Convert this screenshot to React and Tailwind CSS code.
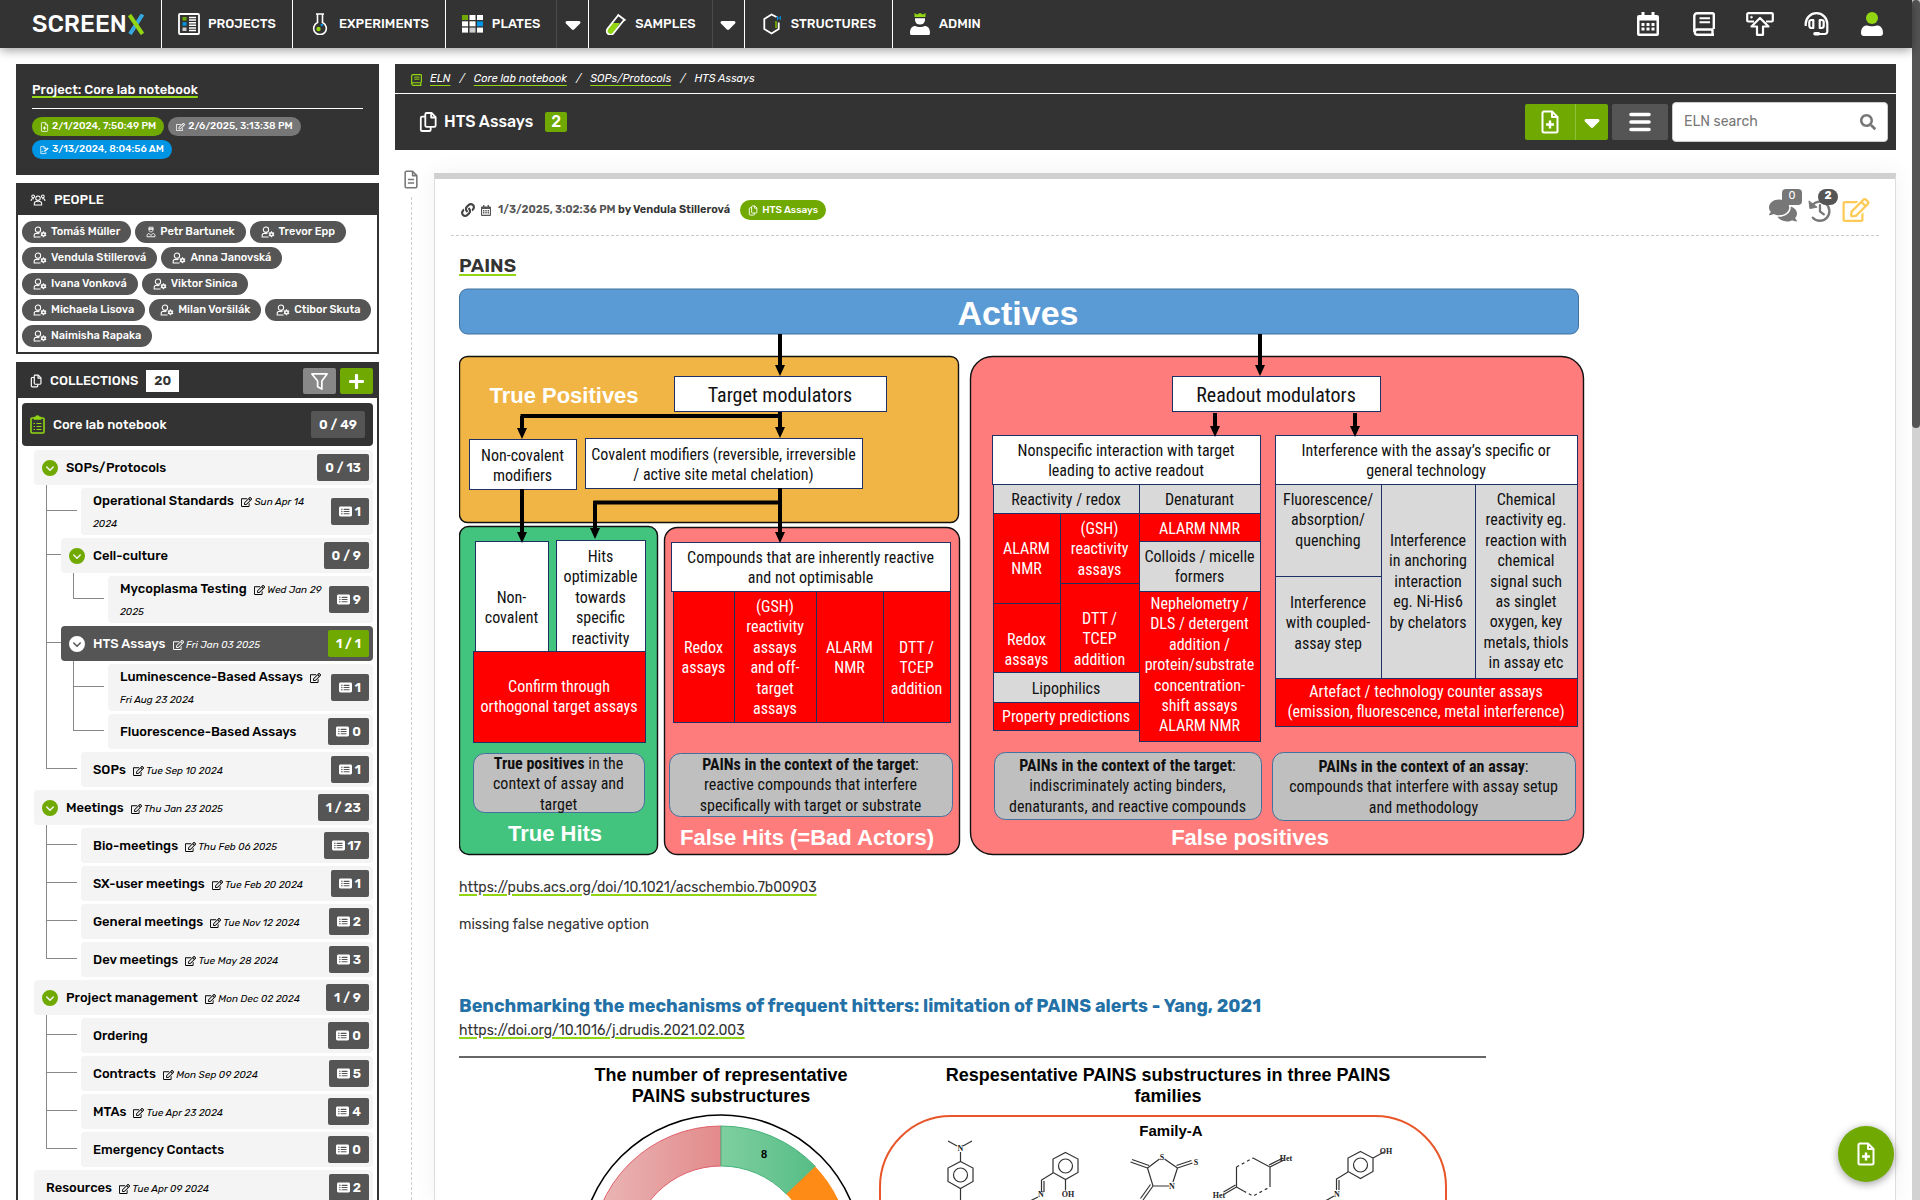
import { FaCaretDown, FaCircleChevronDown, FaRectangleList } from 'react-icons/fa6'
import { FaComments, FaLink, FaPlus, FaRegEdit, FaSearch } from 'react-icons/fa'

/* ---------- Icons ---------- */

function CopyIcon({ className }) {
  return (
    <svg viewBox="0 0 20 24" className={className} fill="none" stroke="currentColor" strokeWidth="2" strokeLinejoin="round" aria-hidden="true">
      <path d="M7 3.5A1.5 1.5 0 0 1 8.5 2H14l4.500 4.500V16a1.500 1.500 0 0 1-1.500 1.500H8.500A1.500 1.500 0 0 1 7 16z" />
      <path d="M13.500 2v5h5" />
      <path d="M7 6H3.500A1.500 1.500 0 0 0 2 7.500V20.500A1.500 1.500 0 0 0 3.500 22h8a1.500 1.500 0 0 0 1.500-1.500v-3" />
    </svg>
  )
}

function FileIcon({ className, children }) {
  return (
    <svg viewBox="0 0 18 24" className={className} fill="none" stroke="currentColor" strokeWidth="2" strokeLinejoin="round" aria-hidden="true">
      <path d="M1.500 3A1.500 1.500 0 0 1 3 1.500h8L16.500 7v14a1.500 1.500 0 0 1-1.500 1.500H3A1.500 1.500 0 0 1 1.500 21z" />
      <path d="M11 1.500V7h5.500" />
      {children}
    </svg>
  )
}

function FilePlusIcon({ className }) {
  return (
    <FileIcon className={className}>
      <path d="M9 10.500v8M5 14.500h8" strokeWidth="2.400" />
    </FileIcon>
  )
}

function FileLinesIcon({ className }) {
  return (
    <FileIcon className={className}>
      <path d="M5 12h8M5 16.500h8" />
    </FileIcon>
  )
}

function FileSignIcon({ className }) {
  return (
    <svg viewBox="0 0 24 22" className={className} fill="none" stroke="currentColor" strokeWidth="2" strokeLinejoin="round" aria-hidden="true">
      <path d="M16 16v4.500H2V1.500h9l5 5" />
      <path d="M10.500 1.500V7H16" />
      <path d="M11 15l1-3 8-7 2.500 2.500-8.500 7z" fill="currentColor" strokeWidth="1" />
      <path d="M5 17l2-4 1.500 3.500" strokeWidth="1.500" />
    </svg>
  )
}

function CalendarIcon({ className }) {
  return (
    <svg viewBox="0 0 22 24" className={className} aria-hidden="true">
      <path fill="currentColor" d="M4.500 0h3v3h7V0h3v3H20a2 2 0 0 1 2 2v17a2 2 0 0 1-2 2H2a2 2 0 0 1-2-2V5a2 2 0 0 1 2-2h2.500zM2.500 8.500V21.500h17V8.500z" fillRule="evenodd" />
      <path fill="currentColor" d="M4.500 11h3v3h-3zM9.500 11h3v3h-3zM14.500 11h3v3h-3zM4.500 15.500h3v3h-3zM9.500 15.500h3v3h-3zM14.500 15.500h3v3h-3z" />
    </svg>
  )
}

function BookIcon({ className }) {
  return (
    <svg viewBox="0 0 22 24" className={className} fill="none" stroke="currentColor" strokeWidth="2.400" aria-hidden="true">
      <path d="M20.500 17.500H4A2.700 2.700 0 0 0 4 22.800h17M20.800 17V2.500a1.200 1.200 0 0 0-1.200-1.200H4A2.700 2.700 0 0 0 1.300 4v16M19.500 17.500v5" />
      <path d="M6.500 6.300H17M6.500 10.300H17" strokeWidth="2" />
    </svg>
  )
}

function UploadIcon({ className }) {
  return (
    <svg viewBox="0 0 28 24" className={className} fill="none" stroke="currentColor" strokeWidth="2.200" strokeLinejoin="round" aria-hidden="true">
      <path d="M8 9.500H2.200a1 1 0 0 1-1-1V2.200a1 1 0 0 1 1-1H25.800a1 1 0 0 1 1 1v6.300a1 1 0 0 1-1 1H20" />
      <path d="M14 6l8.500 8.500H17V22.800h-6V14.500H5.500z" />
      <circle cx="5.500" cy="5.200" r="1" fill="currentColor" strokeWidth="0.500" />
    </svg>
  )
}

function HeadsetIcon({ className }) {
  return (
    <svg viewBox="0 0 24 24" className={className} fill="none" stroke="currentColor" strokeWidth="2.200" strokeLinejoin="round" aria-hidden="true">
      <path d="M1.200 14v-2a10.800 10.800 0 0 1 21.600 0v7.500a2.500 2.500 0 0 1-2.500 2.500H13" />
      <path d="M8.800 8v8H7a2.200 2.200 0 0 1-2.200-2.200V10.200A2.200 2.200 0 0 1 7 8zM15.200 8v8H17a2.200 2.200 0 0 0 2.200-2.200V10.200A2.200 2.200 0 0 0 17 8z" />
      <path d="M10.500 21.700h3.500" strokeWidth="3.600" strokeLinecap="round" />
    </svg>
  )
}

function AccountIcon({ className }) {
  return (
    <svg viewBox="0 0 22 24" className={className} aria-hidden="true">
      <circle cx="11" cy="6" r="6" fill="#92d613" />
      <path d="M0 21c0-5 2.500-7.500 6-7.500 2 1 8 1 10 0 3.500 0 6 2.500 6 7.500a3 3 0 0 1-3 3H3a3 3 0 0 1-3-3z" fill="#fff" />
    </svg>
  )
}

function HistoryIcon({ className }) {
  return (
    <svg viewBox="0 0 24 24" className={className} fill="none" stroke="currentColor" strokeWidth="2.400" aria-hidden="true">
      <path d="M4.500 6.500A10 10 0 1 1 5 19.500" strokeLinecap="round" />
      <path d="M12.500 6.500V13l4 3" strokeLinecap="round" />
      <path d="M1 2l1 8 7.500-1.500z" fill="currentColor" strokeWidth="1" strokeLinejoin="round" />
    </svg>
  )
}

function MenuIcon({ className }) {
  return (
    <svg viewBox="0 0 22 20" className={className} stroke="currentColor" strokeWidth="3.600" strokeLinecap="round" aria-hidden="true">
      <path d="M2 2.500h18M2 10h18M2 17.500h18" />
    </svg>
  )
}

function UserCogIcon({ className }) {
  return (
    <svg viewBox="0 0 24 20" className={className} fill="none" stroke="currentColor" strokeWidth="1.800" aria-hidden="true">
      <circle cx="8.500" cy="6" r="4.600" />
      <path d="M13 18.500H2v-2.500c0-2.500 2-3.800 4-3.800 1.500.8 3.500.8 5 0" />
      <circle cx="18" cy="14" r="2.900" strokeWidth="2.600" />
      <path d="M18 8.800v2M18 17.200v2M13.500 11.400l1.700 1M20.800 15.600l1.700 1M13.500 16.600l1.700-1M20.800 12.400l1.700-1" strokeWidth="2" />
    </svg>
  )
}

function UserTieIcon({ className }) {
  return (
    <svg viewBox="0 0 20 22" className={className} fill="none" stroke="currentColor" strokeWidth="1.800" aria-hidden="true">
      <path d="M5.500 1.500h9M6 2v5c0 2 1.800 3.800 4 3.800S14 9 14 7V2" />
      <path d="M5.500 5h9" strokeWidth="3" />
      <path d="M2 20.500v-2c0-3 2-4.500 4.500-4.500l3.500 4 3.500-4c2.500 0 4.500 1.500 4.500 4.500v2z" />
    </svg>
  )
}

function UsersIcon({ className }) {
  return (
    <svg viewBox="0 0 32 26" className={className} fill="none" stroke="currentColor" strokeWidth="2.200" aria-hidden="true">
      <circle cx="16" cy="9" r="4.800" />
      <circle cx="5.500" cy="5" r="3" />
      <circle cx="26.500" cy="5" r="3" />
      <path d="M8 24v-3c0-3 2-5 4.500-5 2 1 5 1 7 0 2.500 0 4.500 2 4.500 5v3z" />
      <path d="M1.200 15v-1.500a3 3 0 0 1 3-3h3M30.800 15v-1.500a3 3 0 0 0-3-3h-3" />
    </svg>
  )
}

function FilterIcon({ className }) {
  return (
    <svg viewBox="0 0 18 18" className={className} fill="none" stroke="currentColor" strokeWidth="1.800" strokeLinejoin="round" aria-hidden="true">
      <path d="M1 1h16l-5.500 7.500v8.500L7 14.500v-6z" />
    </svg>
  )
}

function ClipboardIcon({ className }) {
  return (
    <svg viewBox="0 0 15 19" className={className} fill="none" stroke="currentColor" strokeWidth="1.600" aria-hidden="true">
      <rect x="1" y="3" width="13" height="15" rx="1" />
      <path d="M4.500 4V2.500h1.500a1.500 1.500 0 0 1 3 0h1.500V4z" fill="currentColor" />
      <path d="M3.500 8.500H5M6.500 8.500H11.500M3.500 11.500H5M6.500 11.500H11.500M3.500 14.500H5M6.500 14.500H11.500" strokeWidth="1.200" />
    </svg>
  )
}

function ProjectsIcon() {
  return (
    <svg viewBox="0 0 22 22" className="h-[22px] w-[22px]" aria-hidden="true">
      <rect x="1" y="1" width="20" height="20" rx="1" fill="none" stroke="#fff" strokeWidth="1.800" />
      <rect x="4.500" y="4" width="4" height="3.500" fill="#6fa901" />
      <rect x="4.500" y="9.200" width="4" height="3.500" fill="#0094e4" />
      <rect x="4.500" y="14.500" width="4" height="3.500" fill="#ccc" />
      <path d="M11 4.500h7M11 7h7M11 9.700h7M11 12.200h7M11 15h7M11 17.500h7" stroke="#fff" strokeWidth="1.500" />
    </svg>
  )
}

function FlaskIcon() {
  return (
    <svg viewBox="0 0 16 22" className="h-[22px] w-4" aria-hidden="true">
      <path d="M4 1h8M5.500 1v8.500a6.300 6.300 0 1 0 5 0V1" fill="none" stroke="#fff" strokeWidth="1.600" />
      <circle cx="6.500" cy="16" r="2.200" fill="#92d613" />
      <circle cx="9.800" cy="12" r="1.300" fill="#0094e4" />
    </svg>
  )
}

function PlatesIcon() {
  const colors = ['#6fa901', '#fff', '#fff', '#fff', '#fff', '#0094e4', '#fff', '#ccc', '#fff']
  return (
    <svg viewBox="0 0 21 18" className="h-[18px] w-[21px]" aria-hidden="true">
      {colors.map((c, i) => (
        <rect key={i} x={(i % 3) * 7.5} y={Math.floor(i / 3) * 6.3} width="6" height="5" fill={c} />
      ))}
    </svg>
  )
}

function TubeIcon() {
  return (
    <svg viewBox="0 0 22 22" className="h-[22px] w-[22px]" aria-hidden="true">
      <path d="M6.500 10h8.500l-6.500 9.500a3.500 3.500 0 0 1-6-4z" fill="#92d613" />
      <path d="M12.500 1.500l8 6M13 2.500L2.500 15.800a3.700 3.700 0 0 0 6 4.400L19 7" fill="none" stroke="#fff" strokeWidth="1.800" />
    </svg>
  )
}

function HexagonIcon() {
  return (
    <svg viewBox="0 0 18 22" className="h-[22px] w-[18px]" aria-hidden="true">
      <path d="M13.500 4L8.500 1.500 1.300 6v10l7.200 4.500 7.200-4.500V9.500" fill="none" stroke="#fff" strokeWidth="1.800" />
      <path d="M13 8v7" stroke="#6fa901" strokeWidth="1.800" />
      <path d="M14.500 3v4M17.300 3v4M14.500 5h3" stroke="#0094e4" strokeWidth="1" />
    </svg>
  )
}

function AdminIcon() {
  return (
    <svg viewBox="0 0 20 22" className="h-[22px] w-5" aria-hidden="true">
      <path d="M4.500 4V0L7 1.500 10 0l3 1.500L15.500 0v4z" fill="#92d613" />
      <path d="M5 5.300h10V7a5 4.500 0 0 1-10 0z" fill="#fff" />
      <path d="M0 20c0-4.500 2-7 5.500-7 2 1.300 7 1.300 9 0 3.500 0 5.500 2.500 5.500 7 0 1.500-.5 2-2 2H2c-1.500 0-2-.5-2-2z" fill="#fff" />
    </svg>
  )
}

function Logo() {
  return (
    <a href="#home" aria-label="ScreenX" className="flex w-[161px] items-center pl-8">
      <span className="text-2xl leading-none font-medium">SCREEN</span>
      <svg viewBox="0 0 18 21" className="h-[21px] w-[18px]" aria-hidden="true">
        <path d="M15.500 0.500L3 20" stroke="#36a9e1" strokeWidth="4" />
        <path d="M2.500 1l13 19" stroke="#92d613" strokeWidth="4" />
      </svg>
    </a>
  )
}

/* ---------- Top navigation ---------- */

const navItems = [
  { label: 'PROJECTS', icon: ProjectsIcon },
  { label: 'EXPERIMENTS', icon: FlaskIcon },
  { label: 'PLATES', icon: PlatesIcon, menu: true },
  { label: 'SAMPLES', icon: TubeIcon, menu: true },
  { label: 'STRUCTURES', icon: HexagonIcon },
  { label: 'ADMIN', icon: AdminIcon },
]

const navActions = [
  { label: 'Calendar', icon: CalendarIcon, size: 'h-6 w-[22px]' },
  { label: 'Notebook', icon: BookIcon, size: 'h-6 w-[22px]' },
  { label: 'Upload', icon: UploadIcon, size: 'h-6 w-7' },
  { label: 'Support', icon: HeadsetIcon, size: 'h-6 w-[25px]' },
  { label: 'Account', icon: AccountIcon, size: 'h-6 w-[22px]' },
]

function Navbar() {
  return (
    <nav className="relative z-10 flex h-12 shrink-0 bg-[#333] text-white shadow-[0_2px_10px_rgba(0,0,0,0.4)]">
      <Logo />
      {navItems.map(({ label, icon: Icon, menu }) => (
        <div key={label} className="flex border-l border-white">
          <a href={`#${label.toLowerCase()}`} className="flex items-center gap-2 px-4 text-[13px] font-medium">
            <span className="flex w-[22px] justify-center">
              <Icon />
            </span>
            {label}
          </a>
          {menu && (
            <button aria-label={`${label} menu`} className="flex w-8 items-center justify-center border-l border-[#4a4a4a]">
              <FaCaretDown className="h-6 w-6" />
            </button>
          )}
        </div>
      ))}
      <div className="ml-auto flex items-center pr-3">
        {navActions.map(({ label, icon: Icon, size }) => (
          <button key={label} aria-label={label} className="flex w-14 justify-center">
            <Icon className={size} />
          </button>
        ))}
      </div>
    </nav>
  )
}

/* ---------- Sidebar ---------- */

const people = [
  'Tomáš Müller',
  'Petr Bartunek',
  'Trevor Epp',
  'Vendula Stillerová',
  'Anna Janovská',
  'Ivana Vonková',
  'Viktor Sinica',
  'Michaela Lisova',
  'Milan Voršilák',
  'Ctibor Skuta',
  'Naimisha Rapaka',
]

const tree = [
  {
    name: 'SOPs/Protocols',
    count: '0 / 13',
    children: [
      { name: 'Operational Standards', date: 'Sun Apr 14 2024', count: '1', tall: true },
      {
        name: 'Cell-culture',
        count: '0 / 9',
        children: [{ name: 'Mycoplasma Testing', date: 'Wed Jan 29 2025', count: '9', tall: true }],
      },
      {
        name: 'HTS Assays',
        date: 'Fri Jan 03 2025',
        count: '1 / 1',
        active: true,
        children: [
          { name: 'Luminescence-Based Assays', date: 'Fri Aug 23 2024', count: '1', tall: true },
          { name: 'Fluorescence-Based Assays', count: '0' },
        ],
      },
      { name: 'SOPs', date: 'Tue Sep 10 2024', count: '1' },
    ],
  },
  {
    name: 'Meetings',
    date: 'Thu Jan 23 2025',
    count: '1 / 23',
    children: [
      { name: 'Bio-meetings', date: 'Thu Feb 06 2025', count: '17' },
      { name: 'SX-user meetings', date: 'Tue Feb 20 2024', count: '1' },
      { name: 'General meetings', date: 'Tue Nov 12 2024', count: '2' },
      { name: 'Dev meetings', date: 'Tue May 28 2024', count: '3' },
    ],
  },
  {
    name: 'Project management',
    date: 'Mon Dec 02 2024',
    count: '1 / 9',
    children: [
      { name: 'Ordering', count: '0' },
      { name: 'Contracts', date: 'Mon Sep 09 2024', count: '5' },
      { name: 'MTAs', date: 'Tue Apr 23 2024', count: '4' },
      { name: 'Emergency Contacts', count: '0' },
    ],
  },
  { name: 'Resources', date: 'Tue Apr 09 2024', count: '2' },
]

function TreeRow({ item }) {
  const { name, date, count, children, active, tall } = item
  return (
    <div
      className={`flex items-center rounded-sm pr-1 ${tall ? 'h-[47px]' : 'h-[35px]'} ${
        active ? 'bg-[#555] text-white' : 'bg-[#f4f4f4] text-black'
      } ${children ? 'pl-2' : 'pl-3'}`}
    >
      {children && (
        <button aria-label={`Toggle ${name}`} className="mr-2 shrink-0">
          <FaCircleChevronDown className={`h-4 w-4 ${active ? 'text-white' : 'text-[#6fa901]'}`} />
        </button>
      )}
      <a href="#collection" className="min-w-0 flex-1 leading-5">
        <span className="text-[13px] font-medium">{name}</span>
        {date && (
          <span className="text-[10px] italic">
            <FaRegEdit className="ml-[7px] inline h-[10px] w-[11px]" /> {date}
          </span>
        )}
      </a>
      <span
        className={`flex h-[27px] shrink-0 items-center gap-[3px] rounded-xs px-2 text-[13px] font-semibold text-white ${
          active ? 'bg-[#6fa901]' : 'bg-[#555]'
        }`}
      >
        {!count.includes('/') && <FaRectangleList className="h-[13px] w-[13px]" />}
        {count}
      </span>
    </div>
  )
}

function TreeBranch({ items }) {
  return (
    <ul className="ml-3">
      {items.map((item, i) => {
        const last = i === items.length - 1
        return (
          <li key={item.name} className="flex">
            <div className={`flex shrink-0 flex-col ${item.children ? 'w-[15px]' : 'w-[35px]'}`}>
              <div
                className={`border-b border-l border-[#888] ${item.tall ? 'h-[26px]' : 'h-5'} ${
                  item.children ? 'w-[15px]' : 'w-[31px]'
                }`}
              />
              {!last && <div className="flex-1 border-l border-[#888]" />}
            </div>
            <div className="min-w-0 flex-1 pt-[3px]">
              <TreeRow item={item} />
              {item.children && <TreeBranch items={item.children} />}
            </div>
          </li>
        )
      })}
    </ul>
  )
}

function Stamp({ color, icon: Icon, children }) {
  return (
    <span className={`flex h-[19px] items-center gap-[3px] rounded-full px-2 text-[10px] font-medium ${color}`}>
      <Icon className="h-[10px] w-[9px]" />
      {children}
    </span>
  )
}

function Sidebar() {
  return (
    <aside className="flex w-[363px] shrink-0 flex-col gap-2">
      <section className="h-[111px] shrink-0 bg-[#333] px-4 pt-4 text-white">
        <h2 className="flex h-7 items-start text-[13px] leading-5 font-medium">
          <a href="#project" className="underline decoration-[#92d613] decoration-2 underline-offset-2">
            Project: Core lab notebook
          </a>
        </h2>
        <div className="mb-2 border-b border-white" />
        <div className="flex flex-wrap gap-1">
          <Stamp color="bg-[#6fa901]" icon={FilePlusIcon}>2/1/2024, 7:50:49 PM</Stamp>
          <Stamp color="bg-[#777]" icon={FaRegEdit}>2/6/2025, 3:13:38 PM</Stamp>
          <Stamp color="bg-[#0094e4]" icon={FileSignIcon}>3/13/2024, 8:04:56 AM</Stamp>
        </div>
      </section>

      <section className="shrink-0 border-2 border-[#333]">
        <h2 className="flex h-[30px] items-center gap-2 bg-[#333] pl-3 text-[13px] font-medium text-white">
          <UsersIcon className="h-3 w-4" />
          PEOPLE
        </h2>
        <ul className="flex flex-wrap gap-1 px-1 pt-[6px] pb-[5px]">
          {people.map((name) => (
            <li key={name} className="flex h-[22px] items-center gap-1 rounded-full bg-[#555] px-[11px] text-[11px] font-medium text-white">
              {name === 'Petr Bartunek' ? <UserTieIcon className="h-3 w-[10px]" /> : <UserCogIcon className="h-3 w-[14px]" />}
              {name}
            </li>
          ))}
        </ul>
      </section>

      <section className="shrink-0 grow border-2 border-b-0 border-[#333]">
        <div className="flex h-[34px] items-center bg-[#333] pr-1 pl-3 text-white">
          <CopyIcon className="mr-2 h-[14px] w-3" />
          <h2 className="mr-2 text-[13px] font-medium">COLLECTIONS</h2>
          <span className="flex h-[22px] items-center bg-white px-2 text-[13px] font-semibold text-[#333]">20</span>
          <button aria-label="Filter collections" className="mr-1 ml-auto flex h-[26px] w-[33px] items-center justify-center rounded-xs bg-[#888]">
            <FilterIcon className="h-[17px] w-[17px]" />
          </button>
          <button aria-label="Add collection" className="flex h-[26px] w-[33px] items-center justify-center rounded-xs bg-[#6fa901]">
            <FaPlus className="h-[17px] w-[17px]" />
          </button>
        </div>
        <div className="px-1 pt-[5px]">
          <div className="mb-1 flex h-[43px] items-center rounded-sm bg-[#333] px-2 text-[13px] font-medium text-white">
            <ClipboardIcon className="mr-2 h-[19px] w-[15px] text-[#92d613]" />
            <a href="#notebook" className="flex-1">Core lab notebook</a>
            <span className="flex h-[27px] items-center rounded-xs bg-[#555] px-2 font-semibold">0 / 49</span>
          </div>
          <ul className="ml-3 flex flex-col gap-[3px]">
            {tree.map((item) => (
              <li key={item.name}>
                <TreeRow item={item} />
                {item.children && <TreeBranch items={item.children} />}
              </li>
            ))}
          </ul>
        </div>
      </section>
    </aside>
  )
}

/* ---------- PAINS decision chart ---------- */

const NAVY = '#1f3064'
const fills = { white: '#fff', grey: '#d9d9d9', red: '#fe0000' }

// x1, y1, x2, y2, fill, first baseline, lines
const cells = [
  [469, 439, 576, 489, 'white', 461, ['Non-covalent', 'modifiers']],
  [585, 438, 862, 488, 'white', 460, ['Covalent modifiers (reversible, irreversible', '/ active site metal chelation)']],
  [475, 541, 548, 651, 'white', 603, ['Non-', 'covalent']],
  [556, 540, 645, 651, 'white', 562, ['Hits', 'optimizable', 'towards', 'specific', 'reactivity']],
  [473, 651, 645, 742, 'red', 692, ['Confirm through', 'orthogonal target assays']],
  [673, 591, 734, 722, 'red', 653, ['Redox', 'assays']],
  [734, 591, 816, 722, 'red', 612, ['(GSH)', 'reactivity', 'assays', 'and off-', 'target', 'assays']],
  [816, 591, 883, 722, 'red', 653, ['ALARM', 'NMR']],
  [883, 591, 950, 722, 'red', 653, ['DTT /', 'TCEP', 'addition']],
  [671, 542, 950, 591, 'white', 563, ['Compounds that are inherently reactive', 'and not optimisable']],
  [992, 435, 1260, 484, 'white', 456, ['Nonspecific interaction with target', 'leading to active readout']],
  [1275, 435, 1577, 484, 'white', 456, ['Interference with the assay’s specific or', 'general technology']],
  [993, 484, 1139, 513, 'grey', 505, ['Reactivity / redox']],
  [1139, 484, 1260, 513, 'grey', 505, ['Denaturant']],
  [993, 513, 1060, 603, 'red', 554, ['ALARM', 'NMR']],
  [1060, 513, 1139, 583, 'red', 534, ['(GSH)', 'reactivity', 'assays']],
  [1139, 513, 1260, 541, 'red', 534, ['ALARM NMR']],
  [1139, 541, 1260, 591, 'grey', 562, ['Colloids / micelle', 'formers']],
  [1139, 591, 1260, 741, 'red', 609, ['Nephelometry /', 'DLS / detergent', 'addition /', 'protein/substrate', 'concentration-', 'shift assays', 'ALARM NMR']],
  [993, 603, 1060, 672, 'red', 645, ['Redox', 'assays']],
  [1060, 583, 1139, 672, 'red', 624, ['DTT /', 'TCEP', 'addition']],
  [993, 672, 1139, 702, 'grey', 694, ['Lipophilics']],
  [993, 702, 1139, 730, 'red', 722, ['Property predictions']],
  [1275, 484, 1381, 576, 'grey', 505, ['Fluorescence/', 'absorption/', 'quenching']],
  [1275, 576, 1381, 678, 'grey', 608, ['Interference', 'with coupled-', 'assay step']],
  [1381, 484, 1475, 678, 'grey', 546, ['Interference', 'in anchoring', 'interaction', 'eg. Ni-His6', 'by chelators']],
  [1475, 484, 1577, 678, 'grey', 505, ['Chemical', 'reactivity eg.', 'reaction with', 'chemical', 'signal such', 'as singlet', 'oxygen, key', 'metals, thiols', 'in assay etc']],
  [1275, 678, 1577, 726, 'red', 697, ['Artefact / technology counter assays', '(emission, fluorescence, metal interference)']],
]

// x1, y1, x2, y2, first baseline, bold part, rest of the first line, other lines
const notes = [
  [473, 753, 644, 812, 769, 'True positives', ' in the', ['context of assay and', 'target']],
  [669, 753, 952, 816, 770, 'PAINs in the context of the target', ':', ['reactive compounds that interfere', 'specifically with target or substrate']],
  [994, 752, 1261, 819, 771, 'PAINs in the context of the target', ':', ['indiscriminately acting binders,', 'denaturants, and reactive compounds']],
  [1272, 752, 1575, 820, 772, 'PAINs in the context of an assay', ':', ['compounds that interfere with assay setup', 'and methodology']],
]

// x, top, tip
const arrows = [
  [780, 334, 376],
  [522, 416, 439],
  [780, 412, 438],
  [522, 489, 543],
  [595, 501, 539],
  [780, 488, 543],
  [1260, 334, 376],
  [1215, 413, 437],
  [1355, 413, 437],
]

function PainsChart() {
  const lineY = (start, i) => start + Math.round(i * 20.4)
  return (
    <svg
      viewBox="459 288 1126 568"
      className="h-[568px] w-[1126px] max-w-none"
      fontFamily="'Arial Narrow', 'Roboto Condensed', 'Liberation Sans', sans-serif"
      fontSize="16"
      textAnchor="middle"
      role="img"
      aria-label="PAINS decision chart"
    >
      <rect x="459.500" y="289" width="1119" height="45" rx="8" fill="#5b9bd5" stroke="#41719c" />
      <rect x="459.500" y="356.500" width="499" height="166" rx="8" fill="#f0b545" stroke="#111" strokeWidth="1.400" />
      <rect x="459.500" y="526.500" width="198" height="328" rx="9" fill="#42c47e" stroke="#111" strokeWidth="1.400" />
      <rect x="664.500" y="527.500" width="295" height="327" rx="13" fill="#ff7c7c" stroke="#111" strokeWidth="1.400" />
      <rect x="970.500" y="356.500" width="613" height="498" rx="22" fill="#ff7c7c" stroke="#111" strokeWidth="1.400" />

      {cells.map(([x1, y1, x2, y2, fill, base, lines]) => (
        <g key={`${x1}-${y1}`}>
          <rect x={x1 + 0.5} y={y1 + 0.5} width={x2 - x1} height={y2 - y1} fill={fills[fill]} stroke={NAVY} />
          {lines.map((line, i) => (
            <text key={i} x={(x1 + x2) / 2} y={lineY(base, i)} fill={fill === 'red' ? '#fff' : '#111'}>
              {line}
            </text>
          ))}
        </g>
      ))}

      {notes.map(([x1, y1, x2, y2, base, strong, tail, lines]) => (
        <g key={x1} fill="#111">
          <rect x={x1 + 0.5} y={y1 + 0.5} width={x2 - x1} height={y2 - y1} rx="11" fill="#bfbfbf" stroke="#41719c" />
          <text x={(x1 + x2) / 2} y={base}>
            <tspan fontWeight="bold">{strong}</tspan>
            {tail}
          </text>
          {lines.map((line, i) => (
            <text key={i} x={(x1 + x2) / 2} y={lineY(base, i + 1)}>
              {line}
            </text>
          ))}
        </g>
      ))}

      <g fontSize="20" fill="#111">
        <rect x="674.500" y="376.500" width="212" height="35" fill="#fff" stroke={NAVY} />
        <text x="780" y="402">Target modulators</text>
        <rect x="1172.500" y="376.500" width="208" height="35" fill="#fff" stroke={NAVY} />
        <text x="1276" y="402">Readout modulators</text>
      </g>

      <path d="M520.500 416H782M593.500 502.500H780" stroke="#000" strokeWidth="4" />
      {arrows.map(([x, top, tip]) => (
        <g key={`${x}-${top}`}>
          <path d={`M${x} ${top}V${tip - 9}`} stroke="#000" strokeWidth="4" />
          <path d={`M${x - 5} ${tip - 11}h10l-5 11z`} />
        </g>
      ))}

      <g fill="#fff" fontFamily="'Liberation Sans', sans-serif" fontWeight="bold" fontSize="22">
        <text x="1018" y="325" fontSize="34">Actives</text>
        <text x="564" y="403">True Positives</text>
        <text x="555" y="841">True Hits</text>
        <text x="807" y="845">False Hits (=Bad Actors)</text>
        <text x="1250" y="845">False positives</text>
      </g>
    </svg>
  )
}

/* ---------- Substructure figure ---------- */

function Ring({ x, y }) {
  return (
    <>
      <path d={`M${x} ${y - 13.5}l12.5 6.5v13.5l-12.5 7-12.5-7V${y - 7}z`} />
      <circle cx={x} cy={y} r="7" />
    </>
  )
}

function SubstructureFigure() {
  return (
    <svg
      viewBox="459 1058 1027 160"
      className="h-[160px] w-[1027px] max-w-none shrink-0"
      fontFamily="'Liberation Sans', sans-serif"
      fontWeight="bold"
      fontSize="18"
      textAnchor="middle"
      role="img"
      aria-label="Representative PAINS substructures"
    >
      <defs>
        <linearGradient id="green" x1="0" x2="1">
          <stop offset="0" stopColor="#7fcfa0" />
          <stop offset="1" stopColor="#56bd86" />
        </linearGradient>
        <linearGradient id="rose" x1="0" x2="1">
          <stop offset="0" stopColor="#eab9b8" />
          <stop offset="1" stopColor="#e38a8b" />
        </linearGradient>
      </defs>
      <text x="721" y="1081">The number of representative</text>
      <text x="721" y="1102">PAINS substructures</text>
      <text x="1168" y="1081">Respesentative PAINS substructures in three PAINS</text>
      <text x="1168" y="1102">families</text>
      <text x="1171" y="1136" fontSize="15">Family-A</text>

      <circle cx="721" cy="1256" r="141" fill="none" stroke="#000" strokeWidth="1.600" />
      <path d="M721 1126A130 130 0 0 0 591 1256H631A90 90 0 0 1 721 1166z" fill="url(#rose)" stroke="#e0606c" />
      <path d="M721 1126A130 130 0 0 1 815.300 1166.500L786.300 1194A90 90 0 0 0 721 1166z" fill="url(#green)" stroke="#46b27a" />
      <path d="M815.300 1166.500A130 130 0 0 1 851 1256H811A90 90 0 0 0 786.300 1194z" fill="#ff8b17" />
      <text x="764" y="1158" fontSize="11">8</text>

      <path d="M880 1218V1187A71 71 0 0 1 951 1116H1375A71 71 0 0 1 1446 1187V1218" fill="none" stroke="#e8562a" strokeWidth="2" />

      <g fill="none" stroke="#333" strokeWidth="1.200">
        <path d="M948 1141l9 5M972 1141l-9 5M960.500 1152v9.500M960.500 1188v20" />
        <Ring x={960.5} y={1175} />
        <Ring x={1065.5} y={1166} />
        <path d="M1065.500 1179.500v11M1053 1173l-11.500 7v12M1044 1181v11M1038 1197l-14 7" />
        <path d="M1159.500 1159l-12 9 5.500 18h16M1164.500 1159l13 9-4.500 14M1147.500 1168l-17-6M1149 1165.500l-17-6M1177.500 1168l15-5M1176.500 1165.500l15-5M1153 1186l-10 14M1150.500 1184.500l-10 14" />
        <path d="M1236.500 1167v20l7 4M1253 1158l17 9v20M1270 1167l14-7M1269 1165l14-7M1236.500 1187l-12 7M1235.500 1185l-12 7" />
        <path d="M1236.500 1167l16.500-9M1243.500 1191l9.500 5 17-9" strokeDasharray="3 3" />
        <Ring x={1360.5} y={1165} />
        <path d="M1373 1158l11-6M1348 1172l-11.500 7v11M1339 1180v10M1334 1196l-14 8" />
      </g>
      <g fontFamily="'Liberation Serif', serif" fontSize="8" fill="#222">
        <text x="960.500" y="1151">N</text>
        <text x="1068" y="1197">OH</text>
        <text x="1041" y="1197">N</text>
        <text x="1162" y="1160">S</text>
        <text x="1172" y="1189">N</text>
        <text x="1196" y="1165">S</text>
        <text x="1286" y="1161">Het</text>
        <text x="1219" y="1198">Het</text>
        <text x="1386" y="1154">OH</text>
        <text x="1337" y="1197">N</text>
      </g>
    </svg>
  )
}

/* ---------- Notebook page ---------- */

function Breadcrumb() {
  const links = ['ELN', 'Core lab notebook', 'SOPs/Protocols']
  return (
    <div className="flex h-[29px] items-center bg-[#333] pt-[2px] pl-4 text-[11px] text-white italic">
      <BookIcon className="mr-2 h-3 w-[11px] text-[#92d613]" />
      {links.map((label) => (
        <span key={label}>
          <a href="#crumb" className="underline decoration-[#92d613] decoration-1 underline-offset-3">{label}</a>
          <span className="mx-[9px]">/</span>
        </span>
      ))}
      <span>HTS Assays</span>
    </div>
  )
}

function TitleBar() {
  return (
    <div className="mt-px flex h-14 items-center bg-[#333] pr-2 pl-6 text-white">
      <CopyIcon className="mr-[7px] h-[22px] w-[18px]" />
      <h1 className="text-base font-medium">HTS Assays</h1>
      <span className="ml-3 flex h-5 items-center rounded-xs bg-[#6fa901] px-[6px] text-base font-medium">2</span>
      <div className="ml-auto flex items-center gap-1">
        <div className="flex h-9 rounded-xs bg-[#6fa901]">
          <button aria-label="New entry" className="flex w-[50px] items-center justify-center">
            <FilePlusIcon className="h-6 w-[18px]" />
          </button>
          <button aria-label="New entry options" className="flex w-[33px] items-center justify-center border-l border-[#8fc03a]">
            <FaCaretDown className="h-6 w-6" />
          </button>
        </div>
        <button aria-label="Menu" className="flex h-9 w-14 items-center justify-center rounded-xs bg-[#555]">
          <MenuIcon className="h-5 w-[22px]" />
        </button>
        <label className="flex h-10 w-[216px] items-center rounded-sm border border-[#ccc] bg-white px-[11px]">
          <input type="text" placeholder="ELN search" className="min-w-0 flex-1 text-sm text-[#333] outline-none placeholder:text-[#777]" />
          <FaSearch className="h-4 w-4 text-[#777]" />
        </label>
      </div>
    </div>
  )
}

function EntryMeta() {
  return (
    <div className="flex h-[57px] items-center border-b border-dashed border-[#ccc] pt-[6px] pr-[9px] pl-[10px]">
      <FaLink className="mr-[6px] h-[14px] w-[14px] text-[#444]" />
      <CalendarIcon className="mr-[7px] h-[11px] w-[10px] text-[#555]" />
      <span className="text-[11px] font-semibold text-[#333]">
        <span className="text-[#555]">1/3/2025, 3:02:36 PM</span> by Vendula Stillerová
      </span>
      <span className="ml-[10px] flex h-5 items-center gap-1 rounded-full bg-[#6fa901] px-2 text-[10px] font-medium text-white">
        <CopyIcon className="h-[11px] w-[10px]" />
        HTS Assays
      </span>
      <div className="ml-auto flex items-center gap-[11px]">
        <button aria-label="Comments" className="relative text-[#777]">
          <FaComments className="h-[27px] w-7" />
          <span className="absolute -top-2 left-[13px] flex h-4 w-5 items-center justify-center rounded-sm bg-[#777] text-[11px] text-white">0</span>
        </button>
        <button aria-label="History" className="relative text-[#777]">
          <HistoryIcon className="h-[23px] w-[23px]" />
          <span className="absolute -top-[10px] left-[10px] flex h-4 w-5 items-center justify-center rounded-full bg-[#555] text-[11px] font-bold text-white">2</span>
        </button>
        <button aria-label="Edit entry" className="text-[#fdcb55]">
          <FaRegEdit className="h-6 w-7" />
        </button>
      </div>
    </div>
  )
}

function TextLink({ href }) {
  return (
    <a href={href} className="text-sm leading-5 underline decoration-[#92d613] decoration-2 underline-offset-2">
      {href}
    </a>
  )
}

function Entry() {
  return (
    <article className="min-w-0 flex-1 border-x border-t-[6px] border-x-[#ddd] border-t-[#d0d0d0] bg-white px-4 shadow-[0_0_24px_rgba(0,0,0,0.06)]">
      <EntryMeta />
      <div className="flex flex-col items-start pl-2 text-[#333]">
        <h2 className="mt-[19px] mb-[11px] text-[19px] leading-[22px] font-semibold underline decoration-[#92d613] decoration-2 underline-offset-2">PAINS</h2>
        <PainsChart />
        <div className="mt-[22px] flex h-5">
          <TextLink href="https://pubs.acs.org/doi/10.1021/acschembio.7b00903" />
        </div>
        <p className="mt-[17px] text-sm leading-5">missing false negative option</p>
        <h3 className="mt-[59px] text-lg leading-6 font-bold text-[#2371a6]">
          Benchmarking the mechanisms of frequent hitters: limitation of PAINS alerts - Yang, 2021
        </h3>
        <div className="mt-[3px] flex h-5">
          <TextLink href="https://doi.org/10.1016/j.drudis.2021.02.003" />
        </div>
        <div className="mt-[15px] h-[2px] w-[1027px] bg-[#666]" />
        <SubstructureFigure />
      </div>
    </article>
  )
}

export default function App() {
  return (
    <div className="flex h-screen w-full overflow-hidden bg-white font-['Rubik','Roboto',sans-serif]">
      <div className="flex min-w-0 flex-1 flex-col">
        <Navbar />
        <div className="flex min-h-0 flex-1 gap-4 overflow-hidden px-4 pt-4">
          <Sidebar />
          <main className="flex min-w-0 flex-1 flex-col">
            <Breadcrumb />
            <TitleBar />
            <div className="flex min-h-0 flex-1 pt-[23px]">
              <div className="flex w-[39px] shrink-0 flex-col">
                <FileLinesIcon className="mt-[-3px] ml-[9px] h-[19px] w-[14px] shrink-0 text-[#777]" />
                <div className="mt-2 ml-4 flex-1 border-l border-dashed border-[#ccc]" />
              </div>
              <Entry />
            </div>
          </main>
        </div>
      </div>
      <div className="w-2 shrink-0 bg-[#d2d2d2]">
        <div className="h-[428px] rounded-full bg-[#555]" />
      </div>
      <button aria-label="New entry" className="fixed right-[26px] bottom-[18px] z-20 flex h-14 w-14 items-center justify-center rounded-full bg-[#6fa901] text-white shadow-[0_2px_8px_rgba(0,0,0,0.4)]">
        <FilePlusIcon className="h-6 w-[18px]" />
      </button>
    </div>
  )
}
